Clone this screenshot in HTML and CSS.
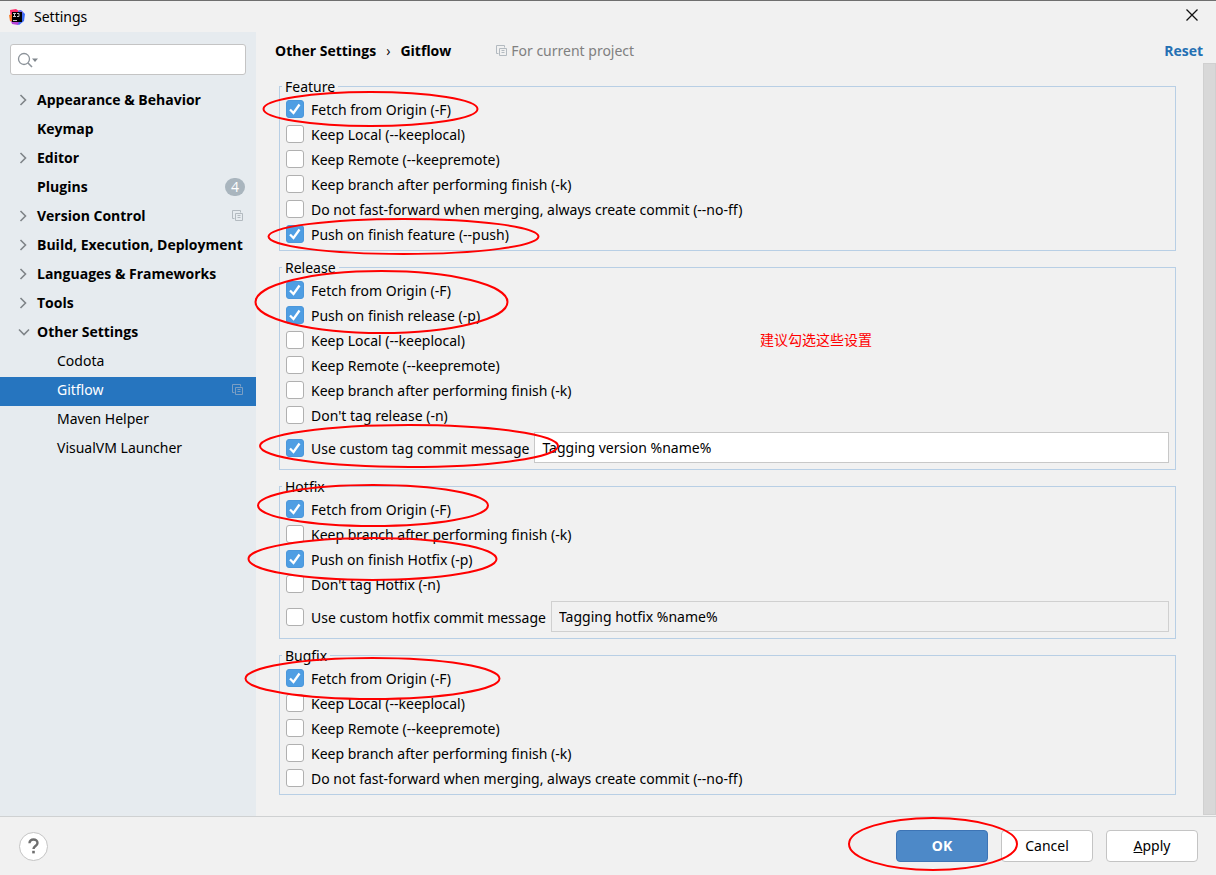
FILE: index.html
```html
<!DOCTYPE html>
<html lang="en">
<head>
<meta charset="utf-8">
<title>Settings</title>
<link rel="stylesheet" href="styles.css">
</head>
<body>
<svg class="defs" aria-hidden="true">
  <symbol id="right" viewBox="0 0 12 12"><path d="M2.500 1 7.500 6l-5 5" fill="none" stroke="#7f8488" stroke-width="1.6"/></symbol>
  <symbol id="down" viewBox="0 0 12 12"><path d="M1 3.5l5 5 5-5" fill="none" stroke="#7f8488" stroke-width="1.6"/></symbol>
  <symbol id="copy" viewBox="0 0 12 12"><path d="M2.500 8.500H.5V.5h8v2M3.500 3.500h7v7h-7zM5.500 5.500h3M5.500 7.500h3" fill="none" stroke="currentColor"/></symbol>
</svg>
<div class="window">
  <header class="titlebar">
    <svg class="logo" viewBox="0 0 16 16" aria-hidden="true">
      <path d="M1 1 7 0l3 2v10H2z" fill="#fe2d6c"/>
      <path d="M0 6l4-1 1 9-4-2z" fill="#f97a26"/>
      <path d="M9 2l3-1 4 4-1 7-5 4-5-3 4-5z" fill="#3d6bf5"/>
      <path d="M2 12h8l-1 4-6-1z" fill="#b744d8"/>
      <path d="M10 1l4 2-1 3-4-2z" fill="#8468e8"/>
      <rect x="3" y="3" width="10" height="10" fill="#000"/>
      <path d="M4 4.500h3M5.500 4.500v3M4 7.500h3M8 4.500h2v3H8M4 11.500h4" fill="none" stroke="#ccc"/>
    </svg>
    <h1 class="title">Settings</h1>
    <button class="close" type="button" aria-label="Close"><svg viewBox="0 0 12 12" width="12" height="12"><path d="M.5.5l11 11M11.500.5l-11 11" stroke="#111" stroke-width="1.300"/></svg></button>
  </header>
  <div class="body">
    <nav class="sidebar">
      <label class="search">
        <svg viewBox="0 0 22 16" width="22" height="16" aria-hidden="true"><circle cx="7" cy="7" r="5.500" fill="none" stroke="#8b9299" stroke-width="1.300"/><path d="M11 11l4 4" stroke="#8b9299" stroke-width="1.600"/><path d="M15 6.500h6l-3 3.500z" fill="#7f868c"/></svg>
        <input type="search" aria-label="Search settings">
      </label>
      <ul class="tree">
        <li><a class="item" href="#"><svg class="arrow"><use href="#right"/></svg><span>Appearance &amp; Behavior</span></a></li>
        <li><a class="item" href="#"><i class="arrow"></i><span>Keymap</span></a></li>
        <li><a class="item" href="#"><svg class="arrow"><use href="#right"/></svg><span>Editor</span></a></li>
        <li><a class="item" href="#"><i class="arrow"></i><span>Plugins</span><b class="count">4</b></a></li>
        <li><a class="item" href="#"><svg class="arrow"><use href="#right"/></svg><span>Version Control</span><svg class="copy"><use href="#copy"/></svg></a></li>
        <li><a class="item" href="#"><svg class="arrow"><use href="#right"/></svg><span>Build, Execution, Deployment</span></a></li>
        <li><a class="item" href="#"><svg class="arrow"><use href="#right"/></svg><span>Languages &amp; Frameworks</span></a></li>
        <li><a class="item" href="#"><svg class="arrow"><use href="#right"/></svg><span>Tools</span></a></li>
        <li><a class="item" href="#"><svg class="arrow"><use href="#down"/></svg><span>Other Settings</span></a></li>
        <li><a class="item child" href="#"><span>Codota</span></a></li>
        <li><a class="item child selected" href="#"><span>Gitflow</span><svg class="copy"><use href="#copy"/></svg></a></li>
        <li><a class="item child" href="#"><span>Maven Helper</span></a></li>
        <li><a class="item child" href="#"><span>VisualVM Launcher</span></a></li>
      </ul>
    </nav>
    <main class="main">
      <div class="heading">
        <h2 class="crumbs"><span>Other Settings</span><span class="sep">›</span><span>Gitflow</span></h2>
        <span class="scope"><svg class="copy"><use href="#copy"/></svg>For current project</span>
        <a class="reset" href="#">Reset</a>
      </div>
      <div class="scroll">
        <form class="groups">
          <fieldset class="group">
            <legend>Feature</legend>
            <label class="row"><input type="checkbox" checked><span>Fetch from Origin (-F)</span></label>
            <label class="row"><input type="checkbox"><span>Keep Local (--keeplocal)</span></label>
            <label class="row"><input type="checkbox"><span>Keep Remote (--keepremote)</span></label>
            <label class="row"><input type="checkbox"><span>Keep branch after performing finish (-k)</span></label>
            <label class="row"><input type="checkbox"><span>Do not fast-forward when merging, always create commit (--no-ff)</span></label>
            <label class="row"><input type="checkbox" checked><span>Push on finish feature (--push)</span></label>
          </fieldset>
          <fieldset class="group">
            <legend>Release</legend>
            <label class="row"><input type="checkbox" checked><span>Fetch from Origin (-F)</span></label>
            <label class="row"><input type="checkbox" checked><span>Push on finish release (-p)</span></label>
            <label class="row"><input type="checkbox"><span>Keep Local (--keeplocal)</span></label>
            <label class="row"><input type="checkbox"><span>Keep Remote (--keepremote)</span></label>
            <label class="row"><input type="checkbox"><span>Keep branch after performing finish (-k)</span></label>
            <label class="row"><input type="checkbox"><span>Don't tag release (-n)</span></label>
            <div class="custom">
              <label class="row"><input type="checkbox" checked><span>Use custom tag commit message</span></label>
              <input class="message" type="text" aria-label="Tag commit message" value="Tagging version %name%">
            </div>
          </fieldset>
          <fieldset class="group">
            <legend>Hotfix</legend>
            <label class="row"><input type="checkbox" checked><span>Fetch from Origin (-F)</span></label>
            <label class="row"><input type="checkbox"><span>Keep branch after performing finish (-k)</span></label>
            <label class="row"><input type="checkbox" checked><span>Push on finish Hotfix (-p)</span></label>
            <label class="row"><input type="checkbox"><span>Don't tag Hotfix (-n)</span></label>
            <div class="custom">
              <label class="row"><input type="checkbox"><span>Use custom hotfix commit message</span></label>
              <input class="message" type="text" aria-label="Hotfix commit message" value="Tagging hotfix %name%" disabled>
            </div>
          </fieldset>
          <fieldset class="group">
            <legend>Bugfix</legend>
            <label class="row"><input type="checkbox" checked><span>Fetch from Origin (-F)</span></label>
            <label class="row"><input type="checkbox"><span>Keep Local (--keeplocal)</span></label>
            <label class="row"><input type="checkbox"><span>Keep Remote (--keepremote)</span></label>
            <label class="row"><input type="checkbox"><span>Keep branch after performing finish (-k)</span></label>
            <label class="row"><input type="checkbox"><span>Do not fast-forward when merging, always create commit (--no-ff)</span></label>
          </fieldset>
        </form>
        <div class="scrollbar"></div>
      </div>
    </main>
  </div>
  <footer class="footer">
    <button class="help" type="button" aria-label="Help"><svg viewBox="0 0 12 16" width="12" height="16"><path d="M1.500 5.200C1.500 2.800 3.300 1.500 5.500 1.500s4 1.300 4 3.400c0 3-4 3.100-4 6" fill="none" stroke="#6e6e6e" stroke-width="2.400"/><rect x="4.200" y="12.800" width="2.600" height="2.600" fill="#6e6e6e"/></svg></button>
    <button class="button primary" type="button">OK</button>
    <button class="button" type="button">Cancel</button>
    <button class="button" type="button"><u>A</u>pply</button>
  </footer>
  <svg class="marks" aria-hidden="true">
    <ellipse cx="370.500" cy="109" rx="107" ry="17"/>
    <ellipse cx="403.500" cy="236.500" rx="135" ry="17.500"/>
    <ellipse cx="381.500" cy="302" rx="126" ry="31"/>
    <ellipse cx="409" cy="446" rx="149" ry="21"/>
    <ellipse cx="373" cy="505.500" rx="115" ry="20.500"/>
    <ellipse cx="372.500" cy="559" rx="124" ry="21"/>
    <ellipse cx="372.500" cy="678.500" rx="127" ry="20.500"/>
    <ellipse cx="933" cy="844" rx="84" ry="26"/>
  </svg>
  <p class="note" lang="zh">建议勾选这些设置</p>
</div>
</body>
</html>
```

FILE: styles.css
```css
* { box-sizing: border-box; }
body {
  margin: 0;
  background: #f1f1f1;
  color: #000;
  font: 14px/20px "Noto Sans", "Open Sans", sans-serif;
}
button, input { font: inherit; color: inherit; }
.defs { position: absolute; width: 0; height: 0; }
.window {
  position: relative;
  display: flex;
  flex-direction: column;
  min-height: 100vh;
  border-top: 1px solid #6f6f6f;
}
.titlebar { display: flex; align-items: center; height: 31px; padding: 0 18px 0 9px; gap: 9px; }
.logo { width: 16px; height: 16px; }
.title { margin: 0; font-size: 14px; font-weight: 400; }
.close { display: flex; margin-left: auto; padding: 0 0 3px; border: 0; background: none; }

.body { display: flex; flex: 1; }
.sidebar { flex: none; width: 256px; padding-top: 12px; background: #e6ebef; }
.search {
  display: flex;
  align-items: center;
  height: 31px;
  margin: 0 10px 12px;
  padding: 0 6px;
  border: 1px solid #c4c4c4;
  border-radius: 3px;
  background: #fff;
}
.search input { flex: 1; min-width: 0; border: 0; outline: 0; background: none; }
.tree { margin: 0; padding: 0; list-style: none; }
.item {
  display: flex;
  align-items: center;
  height: 29px;
  padding: 0 12px 4px 18px;
  color: #000;
  font-family: "Open Sans", "Noto Sans", sans-serif;
  font-weight: 700;
  white-space: nowrap;
  text-decoration: none;
}
.arrow { flex: none; width: 12px; height: 12px; margin-right: 7px; }
.child { padding-left: 57px; font-family: "Noto Sans", "Open Sans", sans-serif; font-weight: 400; }
.selected { background: #2675bf; color: #fff; }
.copy { flex: none; width: 12px; height: 12px; color: #b3bac0; }
.item .copy { margin-left: auto; }
.selected .copy { color: #7b9fc4; }
.count {
  width: 20px;
  height: 18px;
  margin: 0 -1px 0 auto;
  border-radius: 9px;
  background: #a9b5be;
  color: #fff;
  font-weight: 400;
  line-height: 18px;
  text-align: center;
}

.main { display: flex; flex: 1; flex-direction: column; min-width: 0; }
.heading { display: flex; align-items: center; height: 31px; padding: 6px 13px 0 19px; }
.crumbs { display: flex; gap: 10px; margin: 0; font-family: "Open Sans", "Noto Sans", sans-serif; font-size: 14px; }
.sep { font-weight: 400; }
.scope { display: flex; align-items: center; gap: 3px; margin-left: 45px; color: #808080; }
.reset { margin-left: auto; color: #2470b3; font-family: "Open Sans", "Noto Sans", sans-serif; font-weight: 700; text-decoration: none; }
.scroll { display: flex; flex: 1; }
.groups { display: flex; flex: 1; flex-direction: column; gap: 7px; padding: 14px 27px 20px 23px; }
.scrollbar { width: 13px; margin-bottom: 1px; border: 1px solid #d0d0d0; background: #d8d8d8; }
.group { min-width: 0; margin: 0; padding: 0 6px 4px 6px; border: 1px solid #b8cfe5; }
.group legend { height: 19px; margin-left: -4px; padding: 0 3px; }
.row { display: flex; align-items: center; gap: 7px; height: 25px; white-space: nowrap; }
.row span { padding-top: 3px; }
.row input {
  flex: none;
  width: 18px;
  height: 18px;
  margin: 0;
  border: 1px solid #b0b0b0;
  border-radius: 3px;
  appearance: none;
  background: #fff;
}
.row input:checked {
  border-color: #4b97db;
  background: #4f9ee3 url("data:image/svg+xml,%3Csvg xmlns='http://www.w3.org/2000/svg' viewBox='0 0 16 16'%3E%3Cpath d='M3 8.500l3.500 3.500L12.500 3.500' fill='none' stroke='white' stroke-width='2.300'/%3E%3C/svg%3E");
}
.custom { display: flex; align-items: center; gap: 5px; padding: 5px 0 2px; }
.message {
  flex: 1;
  min-width: 0;
  height: 31px;
  padding: 0 7px;
  border: 1px solid #c8c8c8;
  background: #fff;
}
.message:disabled { border-color: #d0d0d0; background: #f1f1f1; color: #000; }

.footer {
  display: flex;
  align-items: center;
  gap: 13px;
  height: 59px;
  padding: 0 18px 0 19px;
  border-top: 1px solid #cfd1d2;
}
.help {
  display: grid;
  place-items: center;
  width: 29px;
  height: 29px;
  margin-right: auto;
  padding: 0;
  border: 1px solid #c4c4c4;
  border-radius: 50%;
  background: #fff;
}
.button {
  width: 92px;
  height: 32px;
  padding: 0;
  border: 1px solid #c4c4c4;
  border-radius: 4px;
  background: #fff;
}
.primary { border-color: #3d74b5; background: #4d89c8; color: #fff; font-weight: 700; }

/* Hand-drawn style notes laid over the dialog */
.marks { position: absolute; top: -1px; left: 0; width: 100%; height: 100%; pointer-events: none; fill: none; stroke: #f00; stroke-width: 2; }
.note {
  position: absolute;
  top: 329px;
  left: 760px;
  margin: 0;
  color: #f00;
  font-family: "Liberation Sans", "Noto Sans CJK SC", sans-serif;
}
```
